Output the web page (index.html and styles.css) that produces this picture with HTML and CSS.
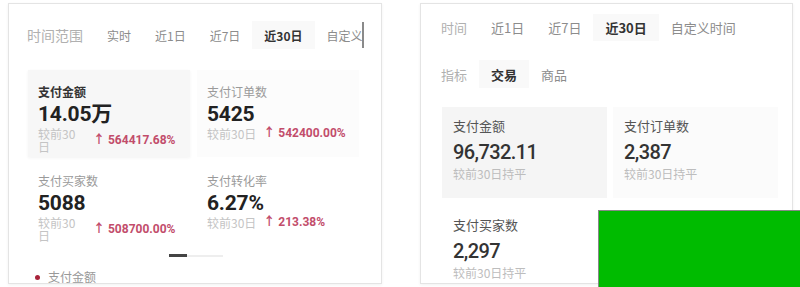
FILE: index.html
```html
<!DOCTYPE html>
<html lang="zh-CN">
<head>
    <meta charset="UTF-8">
    <meta name="viewport" content="width=device-width, initial-scale=1.0">
    <title>数据概览</title>
    <link rel="stylesheet" href="styles.css">
</head>
<body>
    <div class="page">
        <!-- left screenshot -->
        <div class="panel panel-left">
            <div class="tabs tabs-scroll">
                <span class="tab tab-label">时间范围</span>
                <span class="tab">实时</span>
                <span class="tab">近1日</span>
                <span class="tab">近7日</span>
                <span class="tab active">近30日</span>
                <span class="tab">自定义时间</span>
            </div>

            <div class="grid-left">
                <div class="card card-on">
                    <div class="label strong">支付金额</div>
                    <div class="value">14.05万</div>
                    <div class="sub">
                        <span class="cmp narrow">较前30日</span>
                        <span class="up">&#8593; 564417.68%</span>
                    </div>
                </div>
                <div class="card card-faint">
                    <div class="label">支付订单数</div>
                    <div class="value">5425</div>
                    <div class="sub">
                        <span class="cmp">较前30日</span>
                        <span class="up">&#8593; 542400.00%</span>
                    </div>
                </div>
                <div class="card">
                    <div class="label">支付买家数</div>
                    <div class="value">5088</div>
                    <div class="sub">
                        <span class="cmp narrow">较前30日</span>
                        <span class="up">&#8593; 508700.00%</span>
                    </div>
                </div>
                <div class="card">
                    <div class="label">支付转化率</div>
                    <div class="value">6.27%</div>
                    <div class="sub">
                        <span class="cmp">较前30日</span>
                        <span class="up">&#8593; 213.38%</span>
                    </div>
                </div>
            </div>

            <div class="pager">
                <span class="pager-on"></span>
                <span class="pager-off"></span>
            </div>

            <div class="legend">
                <span class="dot"></span>
                <span>支付金额</span>
            </div>
        </div>

        <!-- right screenshot -->
        <div class="panel panel-right">
            <div class="tabs">
                <span class="tab tab-label">时间</span>
                <span class="tab">近1日</span>
                <span class="tab">近7日</span>
                <span class="tab active">近30日</span>
                <span class="tab">自定义时间</span>
            </div>
            <div class="tabs tabs-second">
                <span class="tab tab-label">指标</span>
                <span class="tab active">交易</span>
                <span class="tab">商品</span>
            </div>

            <div class="grid-right">
                <div class="stat stat-on">
                    <div class="stat-label">支付金额</div>
                    <div class="stat-value">96,732.11</div>
                    <div class="stat-sub">较前30日持平</div>
                </div>
                <div class="stat stat-faint">
                    <div class="stat-label">支付订单数</div>
                    <div class="stat-value">2,387</div>
                    <div class="stat-sub">较前30日持平</div>
                </div>
                <div class="stat">
                    <div class="stat-label">支付买家数</div>
                    <div class="stat-value">2,297</div>
                    <div class="stat-sub">较前30日持平</div>
                </div>
            </div>
        </div>

        <div class="green-box"></div>
    </div>
</body>
</html>
```

FILE: styles.css
```css
body {
    margin: 0;
    background-color: #ffffff;
    font-family: "Noto Sans CJK SC", "Noto Sans", sans-serif;
    color: #333;
}
.page {
    position: relative;
    display: flex;
    gap: 38px;
    padding: 3px 7px 0 8px;
    height: 284px;
    overflow: hidden;
}
.panel {
    box-sizing: border-box;
    height: 281px;
    border: 1px solid #e4e4e4;
    box-shadow: 0 1px 3px rgba(0, 0, 0, 0.06);
    overflow: hidden;
}
.panel-left {
    width: 374px;
    padding-top: 17px;
}
.panel-right {
    width: 373px;
    padding-top: 10px;
}

/* tabs */
.tabs {
    display: flex;
    align-items: center;
    height: 27px;
    font-size: 13px;
    white-space: nowrap;
}
.tabs-scroll {
    width: 349px;
    height: 28px;
    margin-left: 6px;
    font-size: 12px;
    overflow: hidden;
    position: relative;
}
.tabs-scroll::after {
    content: "";
    position: absolute;
    right: 0;
    top: 1px;
    bottom: 1px;
    width: 2px;
    background-color: #8a8a8a;
}
.tab {
    padding: 0 12px;
    height: 100%;
    display: flex;
    align-items: center;
    color: #8c8c8c;
}
.tab-label {
    color: #b0b0b0;
}
.tabs-scroll .tab-label {
    font-size: 14px;
}
.tab.active {
    color: #333;
    font-weight: bold;
    background-color: #f9f9f9;
}
.panel-right .tabs {
    padding-left: 9px;
}
.panel-right .tab-label {
    padding-left: 11px;
}
.tabs-second {
    margin-top: 19px;
    height: 28px;
}

/* left cards */
.grid-left {
    display: grid;
    grid-template-columns: 162px 162px;
    column-gap: 7px;
    row-gap: 2px;
    margin: 21px 0 0 19px;
}
.card {
    padding: 12px 10px 5px;
    height: 70px;
}
.card-on {
    background-color: #f7f7f7;
    box-shadow: 0 1px 3px rgba(0, 0, 0, 0.05);
}
.card-faint {
    background-color: #fcfcfc;
}
.label {
    font-size: 12px;
    line-height: 20px;
    color: #9a9a9a;
}
.label.strong {
    color: #333;
    font-weight: bold;
}
.value {
    font-family: Roboto, "Noto Sans CJK SC", sans-serif;
    font-size: 21px;
    line-height: 24px;
    letter-spacing: -0.2px;
    font-weight: bold;
    color: #222;
}
.sub {
    display: flex;
    align-items: center;
    gap: 7px;
    margin-top: 1px;
    font-size: 12px;
    line-height: 13px;
}
.cmp {
    color: #c4c4c4;
    white-space: nowrap;
}
.cmp.narrow {
    width: 48px;
    white-space: normal;
}
.up {
    font-family: Roboto, "Noto Sans CJK SC", sans-serif;
    color: #c24d6b;
    font-weight: bold;
    white-space: nowrap;
}

/* pager + legend */
.pager {
    display: flex;
    justify-content: center;
    margin-top: 8px;
    padding-left: 2px;
}
.pager-on {
    width: 18px;
    height: 3px;
    background-color: #444;
}
.pager-off {
    width: 36px;
    height: 2px;
    margin-top: 1px;
    background-color: #eeeeee;
}
.legend {
    display: flex;
    align-items: center;
    gap: 8px;
    margin: 12px 0 0 26px;
    font-size: 12px;
    line-height: 16px;
    color: #999;
}
.dot {
    width: 5px;
    height: 5px;
    border-radius: 50%;
    background-color: #a8233a;
}

/* right cards */
.grid-right {
    display: grid;
    grid-template-columns: 165px 165px;
    column-gap: 6px;
    row-gap: 8px;
    margin: 19px 0 0 21px;
}
.stat {
    padding: 10px 11px 16px;
}
.stat-on {
    background-color: #f5f5f5;
}
.stat-faint {
    background-color: #fbfbfb;
}
.stat-label {
    font-size: 13px;
    line-height: 18px;
    color: #555;
}
.stat-value {
    margin-top: 4px;
    font-family: Roboto, "Noto Sans CJK SC", sans-serif;
    font-size: 20px;
    line-height: 26px;
    letter-spacing: -0.6px;
    font-weight: 500;
    color: #333;
}
.stat-sub {
    margin-top: 1px;
    font-size: 12px;
    line-height: 16px;
    color: #bdbdbd;
}

.green-box {
    position: absolute;
    left: 598px;
    top: 210px;
    width: 202px;
    height: 77px;
    box-sizing: border-box;
    background-color: #00bb00;
    border-top: 1px solid #888;
    border-left: 1px solid #888;
}
```
